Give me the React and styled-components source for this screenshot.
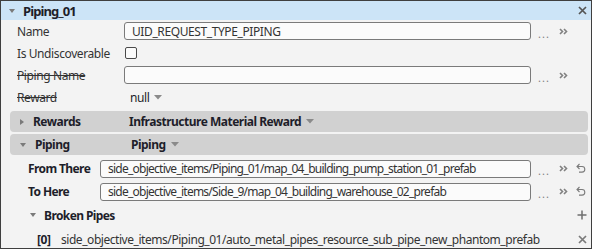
import React from 'react';
import styled, { createGlobalStyle } from 'styled-components';

const GlobalStyle = createGlobalStyle`
  html, body {
    margin: 0;
    padding: 0;
    background: #f3f3f3;
  }
  * {
    box-sizing: border-box;
  }
`;

const Panel = styled.div`
  width: 592px;
  height: 249px;
  border: 1px solid #3f3f3f;
  background: #f3f3f3;
  font-family: 'Noto Sans', 'Open Sans', sans-serif;
  font-size: 12px;
  letter-spacing: -0.4px;
  color: #2b2b2b;
  overflow: hidden;
`;

const Header = styled.div`
  display: flex;
  align-items: center;
  height: 19px;
  padding-left: 8px;
  background: #cce4f7;
  font-size: 13px;
  font-weight: 700;
  letter-spacing: -0.9px;
  color: #1e1e2a;
`;

const HeaderTitle = styled.span`
  flex: 1;
`;

const Caret = styled.span`
  display: inline-block;
  width: 0;
  height: 0;
  margin-right: ${(p) => p.$gap || 8}px;
  border-left: 3px solid transparent;
  border-right: 3px solid transparent;
  border-top: 4px solid #7a7a7a;
  ${(p) =>
    p.$closed &&
    `
    border-top: 3px solid transparent;
    border-bottom: 3px solid transparent;
    border-left: 4px solid #7a7a7a;
    border-right: 0;
  `}
`;

const CloseBtn = styled.span`
  width: 18px;
  display: flex;
  justify-content: center;
  color: #555;
`;

const Row = styled.div`
  display: flex;
  align-items: center;
  height: ${(p) => p.$h || 22}px;
  padding-left: ${(p) => p.$indent || 16}px;
`;

const Label = styled.span`
  width: ${(p) => p.$w}px;
  flex-shrink: 0;
  font-weight: ${(p) => (p.$bold ? 700 : 400)};
  letter-spacing: ${(p) => (p.$bold ? '-0.6px' : '-0.4px')};
  color: ${(p) => (p.$bold ? '#1e1e2a' : '#333')};
  text-decoration: ${(p) => (p.$struck ? 'line-through' : 'none')};
  white-space: nowrap;
`;

const Field = styled.div`
  flex: 1;
  height: 18px;
  display: flex;
  align-items: center;
  padding-left: 7px;
  border: 1px solid #7a7a7a;
  border-radius: 3px;
  background: #fbfbfb;
  color: #333;
  letter-spacing: ${(p) => (p.$tight ? '-0.75px' : '-0.4px')};
  white-space: nowrap;
  overflow: hidden;
`;

const Actions = styled.div`
  width: ${(p) => p.$w || 60}px;
  flex-shrink: 0;
  display: flex;
  align-items: center;
  height: 100%;
  color: #808080;
`;

const Dots = styled.span`
  width: 23px;
  text-align: center;
  letter-spacing: 1px;
  padding-left: 3px;
  font-size: 11px;
  line-height: 1;
  margin-top: 4px;
`;

const IconCell = styled.span`
  width: 18px;
  display: flex;
  justify-content: center;
  align-items: center;
`;

const Spacer = styled.span`
  flex: 1;
`;

const Checkbox = styled.span`
  width: 12px;
  height: 12px;
  margin-left: 1px;
  border: 1px solid #4a4a4a;
  border-radius: 2px;
  background: #fbfbfb;
`;

const Value = styled.span`
  display: flex;
  align-items: center;
  gap: 5px;
  padding-left: 6px;
  font-weight: ${(p) => (p.$bold ? 700 : 400)};
  color: #1e1e2a;
`;

const Sections = styled.div`
  display: flex;
  flex-direction: column;
  gap: 2px;
  margin: 3px 3px 2px 9px;
`;

const SectionBar = styled.div`
  display: flex;
  align-items: center;
  height: 21px;
  padding-left: 10px;
  border-radius: 4px;
  background: #d1d1d1;
  font-weight: 700;
  letter-spacing: -0.5px;
  color: #1e1e2a;
`;

const SectionLabel = styled.span`
  width: 90px;
`;

const ItemText = styled.span`
  flex: 1;
  color: #333;
  letter-spacing: -0.45px;
  white-space: nowrap;
  overflow: hidden;
`;

const Index = styled.span`
  width: 24px;
  font-weight: 700;
  color: #1e1e2a;
`;

const Chevrons = () => (
  <svg width="9" height="7" viewBox="0 0 9 7">
    <path d="M1 1l2.5 2.5L1 6M5 1l2.5 2.5L5 6" fill="none" stroke="#808080" strokeWidth="1.6" />
  </svg>
);

const Undo = () => (
  <svg width="10" height="11" viewBox="0 0 10 11">
    <path d="M3.5 1 1 3.5 3.5 6M1 3.5h5a2.8 2.8 0 0 1 0 5.6H3" fill="none" stroke="#7a7a7a" strokeWidth="1.1" />
  </svg>
);

const Plus = () => (
  <svg width="10" height="10" viewBox="0 0 10 10">
    <path d="M5 0.5v9M0.5 5h9" stroke="#6f6f6f" strokeWidth="1.5" />
  </svg>
);

const Cross = ({ color = '#7a7a7a', size = 9 }) => (
  <svg width={size} height={size} viewBox="0 0 9 9">
    <path d="M1 1l7 7M8 1 1 8" stroke={color} strokeWidth="1.7" />
  </svg>
);

const DropArrow = () => (
  <svg width="8" height="5" viewBox="0 0 8 5">
    <path d="M0 0h8L4 4.5z" fill="#8a8a8a" />
  </svg>
);

const FieldActions = ({ undo }) => (
  <Actions>
    <Dots>...</Dots>
    <IconCell>
      <Chevrons />
    </IconCell>
    {undo && (
      <IconCell>
        <Undo />
      </IconCell>
    )}
  </Actions>
);

const App = () => {
  return (
    <>
      <GlobalStyle />
      <Panel>
        <Header>
          <Caret $gap={8} />
          <HeaderTitle>Piping_01</HeaderTitle>
          <CloseBtn>
            <Cross color="#555" size={9} />
          </CloseBtn>
        </Header>

        <Row>
          <Label $w={107}>Name</Label>
          <Field>UID_REQUEST_TYPE_PIPING</Field>
          <FieldActions />
        </Row>
        <Row>
          <Label $w={107}>Is Undiscoverable</Label>
          <Checkbox />
        </Row>
        <Row>
          <Label $w={107} $struck>
            Piping Name
          </Label>
          <Field />
          <FieldActions />
        </Row>
        <Row>
          <Label $w={107} $struck>
            Reward
          </Label>
          <Value>
            null <DropArrow />
          </Value>
        </Row>

        <Sections>
          <SectionBar>
            <Caret $closed $gap={9} />
            <SectionLabel>Rewards</SectionLabel>
            <Value $bold>
              Infrastructure Material Reward <DropArrow />
            </Value>
          </SectionBar>
          <SectionBar>
            <Caret $gap={9} />
            <SectionLabel>Piping</SectionLabel>
            <Value $bold>
              Piping <DropArrow />
            </Value>
          </SectionBar>
        </Sections>

        <Row $h={23} $indent={27}>
          <Label $w={72} $bold>
            From There
          </Label>
          <Field $tight>side_objective_items/Piping_01/map_04_building_pump_station_01_prefab</Field>
          <FieldActions undo />
        </Row>
        <Row $h={23} $indent={27}>
          <Label $w={72} $bold>
            To Here
          </Label>
          <Field $tight>side_objective_items/Side_9/map_04_building_warehouse_02_prefab</Field>
          <FieldActions undo />
        </Row>
        <Row $h={24} $indent={29}>
          <Caret $gap={8} />
          <Label $w={0} $bold>
            Broken Pipes
          </Label>
          <Spacer />
          <Actions>
            <Spacer />
            <IconCell>
              <Plus />
            </IconCell>
          </Actions>
        </Row>
        <Row $h={24} $indent={36}>
          <Index>[0]</Index>
          <ItemText>side_objective_items/Piping_01/auto_metal_pipes_resource_sub_pipe_new_phantom_prefab</ItemText>
          <Actions $w={24}>
            <Spacer />
            <IconCell>
              <Cross />
            </IconCell>
          </Actions>
        </Row>
      </Panel>
    </>
  );
};

export default App;
